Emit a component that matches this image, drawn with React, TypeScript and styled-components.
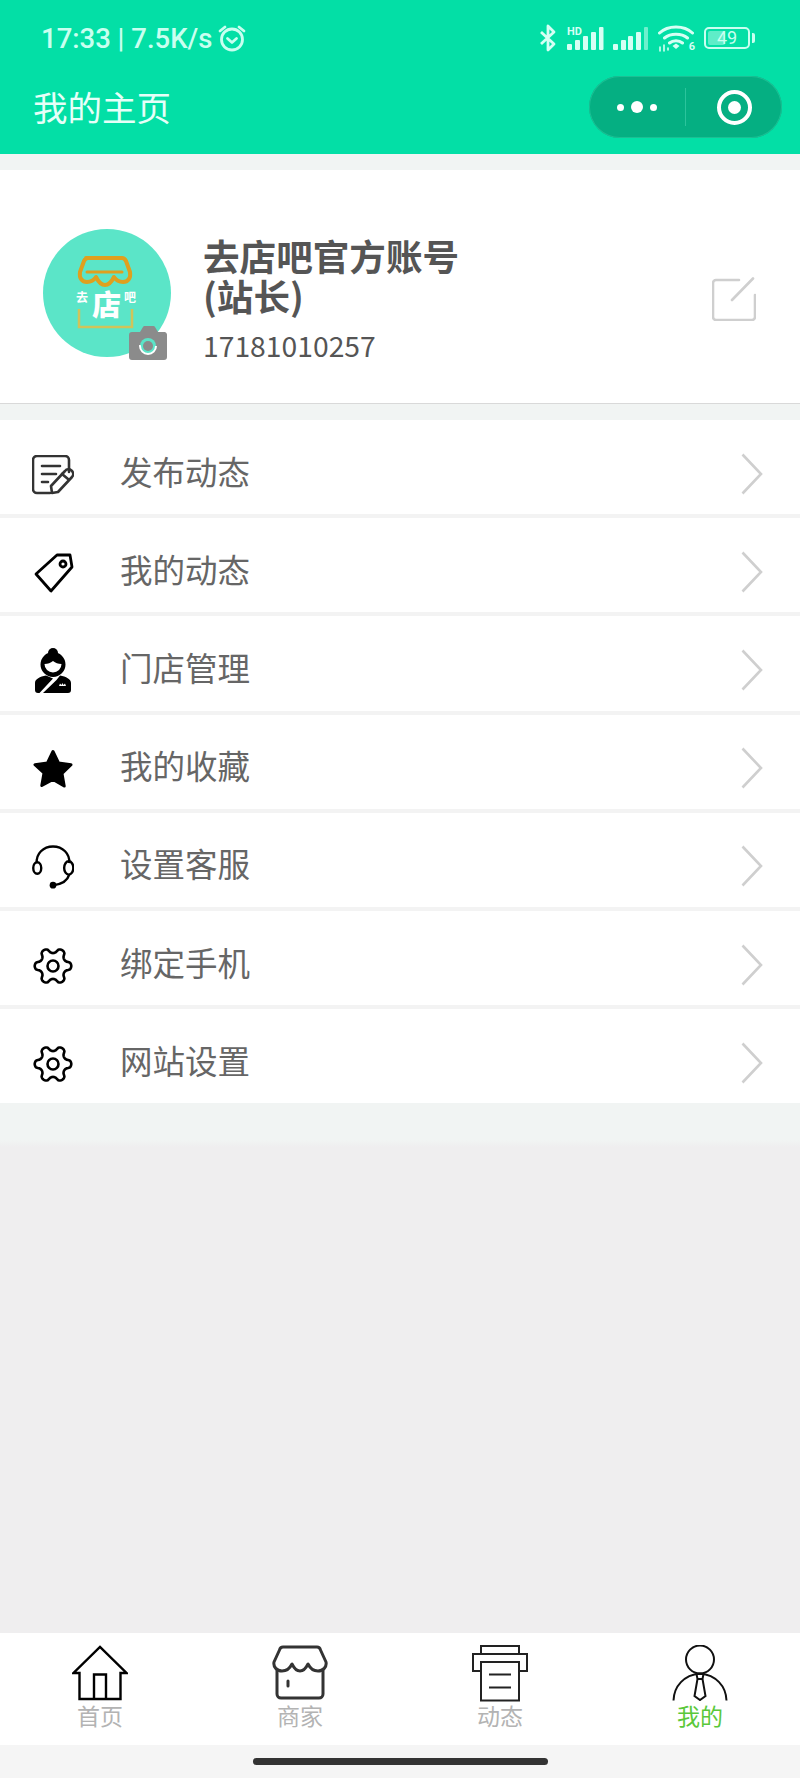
import { ReactNode } from 'react';
import styled, { createGlobalStyle } from 'styled-components';

const GlobalStyle = createGlobalStyle`
  html, body {
    margin: 0;
    padding: 0;
    background: #efeeef;
  }
  * {
    box-sizing: border-box;
  }
`;

const gearPath = (() => {
  const points: string[] = [];
  for (let i = 0; i < 120; i++) {
    const angle = (i / 120) * Math.PI * 2;
    const wave = Math.cos(6 * angle);
    const radius = 15.6 + 2.7 * Math.sign(wave) * Math.pow(Math.abs(wave), 0.55);
    const x = 21 + radius * Math.cos(angle);
    const y = 20 + radius * Math.sin(angle);
    points.push(`${x.toFixed(2)} ${y.toFixed(2)}`);
  }
  return `M${points.join('L')}Z`;
})();

function NoteIcon() {
  return (
    <svg width="42" height="40" viewBox="0 0 42 40" fill="none" stroke="#333" strokeWidth="2.6" strokeLinecap="round" strokeLinejoin="round">
      <path d="M18 38H5a4 4 0 0 1-4-4V5a4 4 0 0 1 4-4h28a4 4 0 0 1 4 4v12" />
      <path d="M10 11h18M10 19h14M10 27h6" />
      <path d="M20 38l-1-7 14-15a3.5 3.5 0 0 1 7 6L26 37z" />
      <path d="M30 19l6 5" />
    </svg>
  );
}

function TagIcon() {
  return (
    <svg width="42" height="40" viewBox="0 0 42 40" fill="none" stroke="#000" strokeWidth="2.8" strokeLinejoin="round">
      <path d="M4 21L25 2h13l2 12-21 24z" />
      <circle cx="31" cy="11" r="3" />
    </svg>
  );
}

function StaffIcon() {
  return (
    <svg width="38" height="46" viewBox="0 0 38 46" fill="#000">
      <circle cx="19" cy="5" r="5" />
      <path fillRule="evenodd" d="M19 4a12.500 12.500 0 1 1 0 25 12.500 12.500 0 0 1 0-25zM10.500 16a8.500 8.500 0 1 0 17 0c-3.500 0-6-1-8.500-3-2.500 2-5 3-8.500 3z" />
      <path d="M12 27.500l7 3L5.500 45H4a3 3 0 0 1-3-3v-7c0-4 5-6.500 11-7.500zM26 27.500c6 1 11 3.500 11 7.500v7a3 3 0 0 1-3 3H9l13.500-13z" />
      <path d="M25 38l1-2.500 1.500 1.500 1-2 1 2 1.500-1.500 1 2.500z" fill="#fff" />
    </svg>
  );
}

function StarIcon() {
  return (
    <svg width="42" height="40" viewBox="0 0 42 40" fill="#000" stroke="#000" strokeWidth="3" strokeLinejoin="round">
      <path d="M21 2.500l5.500 11.500 12.500 1.700-9 8.800 2.200 12.500L21 30.500 9.800 36.500 12 24 3 15.700 15.500 14z" />
    </svg>
  );
}

function HeadsetIcon() {
  return (
    <svg width="44" height="46" viewBox="0 0 44 46" fill="none" stroke="#000" strokeWidth="2.500">
      <path d="M5 19C4 9 12 1.500 22 1.500S40 9 39 19" />
      <ellipse cx="5.500" cy="24" rx="4.200" ry="6" />
      <ellipse cx="38.500" cy="24" rx="4.800" ry="7" />
      <path d="M39 31c-2 7-9 10-16 11" />
      <circle cx="22" cy="42" r="3.500" fill="#000" stroke="none" />
    </svg>
  );
}

function GearIcon() {
  return (
    <svg width="42" height="40" viewBox="0 0 42 40" fill="none" stroke="#000" strokeWidth="2.6" strokeLinejoin="round">
      <path d={gearPath} />
      <circle cx="21" cy="20" r="5.500" />
    </svg>
  );
}

function Chevron() {
  return (
    <ChevronBox>
      <svg width="22" height="42" viewBox="0 0 22 42" fill="none" stroke="#cfcfcf" strokeWidth="2.600">
        <path d="M1.500 1.500L20 21 1.500 40.500" />
      </svg>
    </ChevronBox>
  );
}

function HomeTab() {
  return (
    <svg width="56" height="56" viewBox="0 0 56 56" fill="none" stroke="#000" strokeWidth="2.400">
      <path d="M7.500 54V28H1.500L28 2l26.500 26H48.500V54z" />
      <path d="M22 54V29.500h12V54" />
    </svg>
  );
}

function ShopTab() {
  return (
    <svg width="56" height="56" viewBox="0 0 56 56" fill="none" stroke="#333" strokeWidth="3" strokeLinejoin="round">
      <path d="M11 2H45c2 0 3 1 3.500 3L54 17c1 5-3 9-8 9-4 0-8-3-10-7-2 4-4 7-8 7s-6-3-8-7c-2 4-6 7-10 7-5 0-9-4-8-9L7.500 5C8 3 9 2 11 2z" />
      <path d="M5 24v25a4 4 0 0 0 4 4h38a4 4 0 0 0 4-4V24" />
      <path d="M16 36v5" strokeLinecap="round" />
    </svg>
  );
}

function PrinterTab() {
  return (
    <svg width="56" height="57" viewBox="0 0 56 57" fill="none" stroke="#222" strokeWidth="2">
      <rect x="9" y="1" width="38" height="9" />
      <rect x="1" y="9" width="54" height="17" fill="#fff" />
      <rect x="9" y="17" width="38" height="38.500" fill="#fff" />
      <path d="M17 29.500h22M17 42.500h22" />
    </svg>
  );
}

function PersonTab() {
  return (
    <svg width="56" height="56" viewBox="0 0 56 56" fill="none" stroke="#111" strokeWidth="2">
      <circle cx="28" cy="14.500" r="14" />
      <path d="M1.500 55.500C2 41 12 30 28 28.500 44 30 54 41 54.500 55.500" />
      <path d="M24.500 29h7l-1 5 3 17-5.500 4-5.500-4 3-17z" fill="#fff" />
      <path d="M25.500 34h5" />
    </svg>
  );
}

const menuItems: { label: string; icon: ReactNode }[] = [
  { label: '发布动态', icon: <NoteIcon /> },
  { label: '我的动态', icon: <TagIcon /> },
  { label: '门店管理', icon: <StaffIcon /> },
  { label: '我的收藏', icon: <StarIcon /> },
  { label: '设置客服', icon: <HeadsetIcon /> },
  { label: '绑定手机', icon: <GearIcon /> },
  { label: '网站设置', icon: <GearIcon /> },
];

const tabs: { label: string; icon: ReactNode; active?: boolean }[] = [
  { label: '首页', icon: <HomeTab /> },
  { label: '商家', icon: <ShopTab /> },
  { label: '动态', icon: <PrinterTab /> },
  { label: '我的', icon: <PersonTab />, active: true },
];

export default function App() {
  return (
    <Page>
      <GlobalStyle />
      <Header>
        <StatusBar>
          <StatusLeft>
            <StatusText>17:33 | 7.5K/s</StatusText>
            <svg width="28" height="28" viewBox="0 0 28 28" fill="none" stroke="#c9fff0" strokeWidth="2.800" strokeLinecap="round" strokeLinejoin="round">
              <circle cx="14" cy="15.500" r="10.500" />
              <path d="M9.500 14.500l4.500 4 4.500-4M2 7l5-4M26 7l-5-4" />
            </svg>
          </StatusLeft>
          <StatusRight>
            <svg width="18" height="28" viewBox="0 0 18 28" fill="none" stroke="#d6fff4" strokeWidth="2.800" strokeLinejoin="round">
              <path d="M2 8l13 12-6 6V2l6 6L2 20" />
            </svg>
            <SignalGroup>
              <HdMark>HD</HdMark>
              <svg width="38" height="24" viewBox="0 0 38 24" fill="#d6fff4">
                <rect x="1" y="18" width="5" height="6" rx="1" />
                <rect x="9" y="14" width="5" height="10" rx="1" />
                <rect x="17" y="10" width="5" height="14" rx="1" />
                <rect x="25" y="6" width="5" height="18" rx="1" />
                <rect x="33" y="1" width="4.500" height="23" rx="1" />
              </svg>
            </SignalGroup>
            <svg width="36" height="24" viewBox="0 0 36 24" fill="#d6fff4">
              <rect x="0" y="18" width="5" height="6" rx="1" />
              <rect x="8" y="14" width="5" height="10" rx="1" />
              <rect x="15" y="10" width="5" height="14" rx="1" />
              <rect x="23" y="6" width="5" height="18" rx="1" />
              <rect x="31" y="1" width="4" height="23" rx="1" fill="#6ff0cd" />
            </svg>
            <WifiBox>
              <svg width="36" height="28" viewBox="0 0 36 28" fill="none" stroke="#d6fff4" strokeWidth="3" strokeLinecap="round">
                <path d="M1.500 9C10 1 26 1 34.500 9M6.500 14c6-5 17-5 23 0M11.500 19c3.500-3 9.500-3 13 0" />
                <path d="M14.500 22l3.500-2.500 3.500 2.500-3.500 3z" fill="#d6fff4" stroke="none" />
                <path d="M2 23v4M6 21v6M10 24v2" strokeWidth="1.600" />
              </svg>
              <WifiSix>6</WifiSix>
            </WifiBox>
            <Battery>
              <BatteryFill />
              <BatteryText>49</BatteryText>
              <BatteryTip />
            </Battery>
          </StatusRight>
        </StatusBar>
        <NavBar>
          <NavTitle>我的主页</NavTitle>
          <Capsule>
            <CapsuleSide>
              <Dot $big={false} />
              <Dot $big />
              <Dot $big={false} />
            </CapsuleSide>
            <CapsuleDivider />
            <CapsuleSide>
              <Ring />
            </CapsuleSide>
          </Capsule>
        </NavBar>
      </Header>

      <Content>
        <ProfileCard>
          <Avatar>
            <svg width="128" height="128" viewBox="0 0 128 128" fill="none">
              <path d="M43 29H79c2 0 3 1 4 3l4 11c1 6-2 10-7 10-4 0-7-2-9-5-2 4-5 8-9 8s-7-4-9-8c-2 3-5 5-9 5-5 0-8-4-7-10l4-11c1-2 2-3 4-3z" stroke="#dfa01e" strokeWidth="4" strokeLinejoin="round" />
              <path d="M44 43h35" stroke="#dfa01e" strokeWidth="3" strokeLinecap="round" />
              <path d="M36 80v18h53V80" stroke="#d0c45a" strokeWidth="2.500" />
              <text x="33" y="73" fontFamily="'Noto Sans CJK SC', sans-serif" fontSize="12" fontWeight="700" fill="#fff">去</text>
              <text x="49" y="87" fontFamily="'Noto Sans CJK SC', sans-serif" fontSize="29" fontWeight="900" fill="#fff">店</text>
              <text x="81" y="73" fontFamily="'Noto Sans CJK SC', sans-serif" fontSize="12" fontWeight="700" fill="#fff">吧</text>
            </svg>
            <CameraBadge>
              <svg width="38" height="34" viewBox="0 0 38 34">
                <path d="M3 6h8l3-5a2 2 0 0 1 1.500-1h9a2 2 0 0 1 1.500 1l3 5h7a3 3 0 0 1 2 3v22a3 3 0 0 1-3 3H3a3 3 0 0 1-3-3V9a3 3 0 0 1 3-3z" fill="#8b8b8b" />
                <circle cx="19" cy="20" r="8" fill="#5be5c8" />
                <circle cx="19" cy="20" r="8" fill="none" stroke="#fff" strokeWidth="2" strokeDasharray="26 50" />
                <circle cx="19" cy="20" r="5" fill="#8b8b8b" />
              </svg>
            </CameraBadge>
          </Avatar>
          <ProfileInfo>
            <ProfileName>
              <ProfileNameLine>去店吧官方账号</ProfileNameLine>
              <ProfileNameLine>(站长)</ProfileNameLine>
            </ProfileName>
            <ProfilePhone>17181010257</ProfilePhone>
          </ProfileInfo>
          <EditButton>
            <svg width="44" height="44" viewBox="0 0 44 44" fill="none" stroke="#cfcfcf" strokeWidth="2.600" strokeLinecap="round">
              <path d="M27 3H4a3 3 0 0 0-3 3v34a3 3 0 0 0 3 3h36a3 3 0 0 0 3-3V18" />
              <path d="M20 23L41 1.500" />
            </svg>
          </EditButton>
        </ProfileCard>

        <Menu>
          {menuItems.map(item => {
            return (
              <MenuRow key={item.label}>
                <MenuIcon>{item.icon}</MenuIcon>
                <MenuLabel>{item.label}</MenuLabel>
                <Chevron />
              </MenuRow>
            );
          })}
        </Menu>

        <MenuFade />
      </Content>
      <Filler />

      <TabBar>
        {tabs.map(tab => {
          return (
            <TabItem key={tab.label}>
              <TabIcon>{tab.icon}</TabIcon>
              <TabLabel $active={!!tab.active}>{tab.label}</TabLabel>
            </TabItem>
          );
        })}
      </TabBar>
      <HomeArea>
        <HomeIndicator />
      </HomeArea>
    </Page>
  );
}

const Page = styled.div`
  width: 800px;
  height: 1778px;
  display: flex;
  flex-direction: column;
  overflow: hidden;
  background: #efeeef;
  font-family: 'Noto Sans CJK SC', 'Noto Sans', sans-serif;
`;
const Header = styled.header`
  height: 154px;
  flex-shrink: 0;
  background: #03dfa6;
`;
const StatusBar = styled.div`
  height: 76px;
  display: flex;
  align-items: center;
  justify-content: space-between;
  padding: 0 45px 0 41px;
`;
const StatusLeft = styled.div`
  display: flex;
  align-items: center;
  gap: 6px;
`;
const StatusText = styled.span`
  padding-top: 2px;
  font-family: Roboto, sans-serif;
  font-size: 27.5px;
  line-height: 32px;
  font-weight: 500;
  color: #c9fff0;
  white-space: nowrap;
`;
const StatusRight = styled.div`
  display: flex;
  align-items: center;
  gap: 9px;
`;
const SignalGroup = styled.div`
  position: relative;
  width: 38px;
  height: 24px;
`;
const HdMark = styled.span`
  position: absolute;
  left: 1px;
  top: 0;
  font-family: Roboto, sans-serif;
  font-size: 11px;
  line-height: 12px;
  font-weight: 700;
  color: #d6fff4;
`;
const WifiBox = styled.div`
  position: relative;
  width: 36px;
  height: 28px;
`;
const WifiSix = styled.span`
  position: absolute;
  right: -1px;
  bottom: -1px;
  font-family: Roboto, sans-serif;
  font-size: 11px;
  line-height: 12px;
  font-weight: 700;
  color: #d6fff4;
`;
const Battery = styled.div`
  position: relative;
  width: 46px;
  height: 22px;
  margin: 0 5px 0 1px;
  border: 2px solid #c9fff0;
  border-radius: 5px;
  display: flex;
  align-items: center;
  justify-content: center;
`;
const BatteryFill = styled.div`
  position: absolute;
  left: 2px;
  top: 2px;
  bottom: 2px;
  width: 17px;
  border-radius: 2px;
  background: #5fedc8;
`;
const BatteryText = styled.span`
  position: relative;
  font-family: Roboto, sans-serif;
  font-size: 18px;
  line-height: 18px;
  color: #c9fff0;
`;
const BatteryTip = styled.div`
  position: absolute;
  right: -7px;
  top: 4px;
  width: 3px;
  height: 10px;
  border-radius: 0 2px 2px 0;
  background: #c9fff0;
`;
const NavBar = styled.div`
  height: 62px;
  display: flex;
  align-items: center;
  justify-content: space-between;
  padding: 0 18px 2px 33px;
`;
const NavTitle = styled.h1`
  margin: 0;
  font-size: 34.5px;
  line-height: 44px;
  font-weight: 400;
  color: #e6fff8;
`;
const Capsule = styled.div`
  width: 193px;
  height: 62px;
  margin-bottom: -2px;
  display: flex;
  align-items: center;
  border-radius: 31px;
  background: #05af82;
  box-shadow: inset 0 0 0 1px #1cbf94;
`;
const CapsuleSide = styled.div`
  flex: 1;
  display: flex;
  align-items: center;
  justify-content: center;
  gap: 7px;
`;
const Dot = styled.div<{ $big: boolean }>`
  width: ${({ $big }) => ($big ? '12px' : '7px')};
  height: ${({ $big }) => ($big ? '12px' : '7px')};
  border-radius: 50%;
  background: #fff;
`;
const CapsuleDivider = styled.div`
  width: 1px;
  height: 38px;
  background: #2cc49c;
`;
const Ring = styled.div`
  width: 35px;
  height: 35px;
  border: 4px solid #fff;
  border-radius: 50%;
  display: flex;
  align-items: center;
  justify-content: center;
  &::after {
    content: '';
    width: 13px;
    height: 13px;
    border-radius: 50%;
    background: #fff;
  }
`;
const Content = styled.main`
  flex-shrink: 0;
  padding-top: 16px;
  background: #f1f4f3;
`;
const ProfileCard = styled.section`
  height: 234px;
  padding: 12px 44px 0 43px;
  display: flex;
  align-items: center;
  background: #fff;
  border-bottom: 1px solid #d9d9d9;
`;
const Avatar = styled.div`
  position: relative;
  width: 128px;
  height: 128px;
  flex-shrink: 0;
  border-radius: 50%;
  background: #5be5c8;
`;
const CameraBadge = styled.div`
  position: absolute;
  right: 4px;
  bottom: -3px;
  width: 38px;
  height: 34px;
  line-height: 0;
`;
const ProfileInfo = styled.div`
  flex: 1;
  margin: 15px 0 0 32px;
  color: #555;
`;
const ProfileName = styled.div`
  font-size: 36.6px;
  font-weight: 700;
`;
const ProfileNameLine = styled.div`
  height: 40px;
  line-height: 40px;
`;
const ProfilePhone = styled.div`
  margin-top: 9px;
  font-size: 28.3px;
  line-height: 40px;
`;
const EditButton = styled.div`
  width: 44px;
  height: 44px;
  margin-top: 12px;
  line-height: 0;
`;
const Menu = styled.div`
  margin-top: 16px;
  display: flex;
  flex-direction: column;
  gap: 4px;
  background: #f3f3f3;
`;
const MenuRow = styled.div`
  height: 94.2px;
  padding: 11px 37px 0 32px;
  display: flex;
  align-items: center;
  background: #fff;
`;
const MenuIcon = styled.div`
  width: 42px;
  margin-top: 4px;
  display: flex;
  justify-content: center;
  line-height: 0;
`;
const MenuLabel = styled.div`
  flex: 1;
  margin: 0 0 4px 46px;
  font-size: 32.5px;
  line-height: 44px;
  color: #666;
`;
const ChevronBox = styled.div`
  margin-top: 2px;
  line-height: 0;
`;
const MenuFade = styled.div`
  height: 44px;
  background: linear-gradient(#f1f4f3 85%, #efeeef);
`;
const Filler = styled.div`
  flex: 1;
`;
const TabBar = styled.nav`
  height: 112px;
  flex-shrink: 0;
  padding-top: 12px;
  display: grid;
  grid-template-columns: repeat(4, 1fr);
  background: #fff;
`;
const TabItem = styled.div`
  display: flex;
  flex-direction: column;
  align-items: center;
`;
const TabIcon = styled.div`
  height: 55px;
  line-height: 0;
`;
const TabLabel = styled.div<{ $active: boolean }>`
  font-size: 23px;
  line-height: 30px;
  color: ${({ $active }) => ($active ? '#5ac83a' : '#b3b3b3')};
`;
const HomeArea = styled.div`
  height: 33px;
  flex-shrink: 0;
  padding-top: 13px;
  display: flex;
  justify-content: center;
  background: #f5f5f5;
`;
const HomeIndicator = styled.div`
  width: 295px;
  height: 7px;
  border-radius: 4px;
  background: #333;
`;
